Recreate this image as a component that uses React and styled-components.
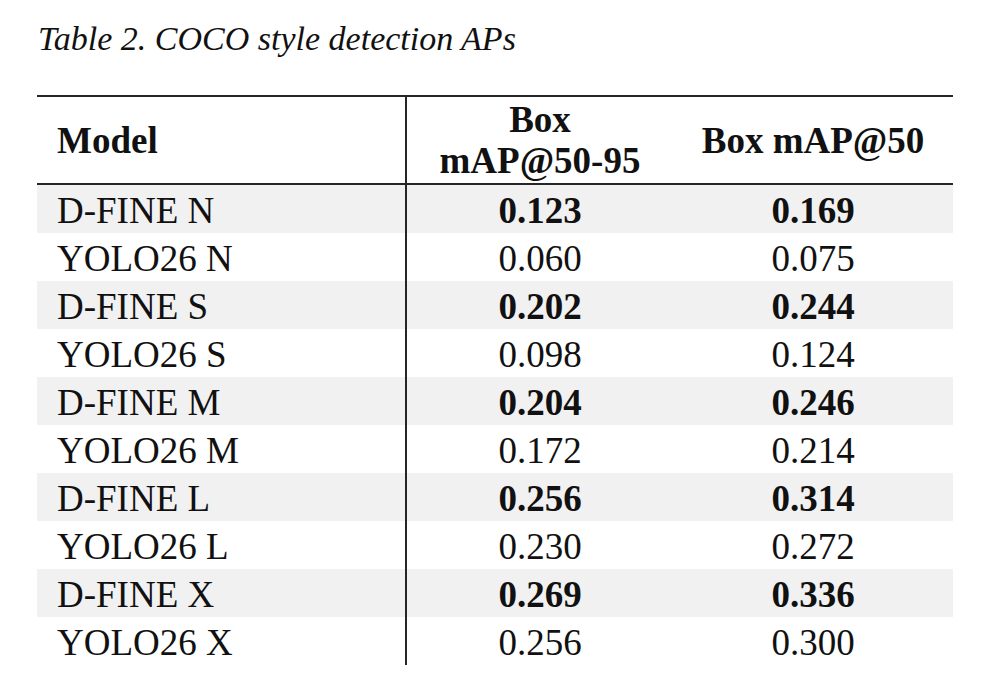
import React from "react";
import styled, { createGlobalStyle } from "styled-components";

const GlobalStyle = createGlobalStyle`
  body {
    margin: 0;
    background: #ffffff;
    font-family: "Liberation Serif", "Times New Roman", serif;
    color: #111111;
  }
`;

const Page = styled.div`
  padding: 19px 0 0 37px;
`;

const Caption = styled.div`
  font-style: italic;
  font-size: 34px;
  line-height: 40px;
  margin-left: 1px;
  margin-bottom: 36px;
`;

const Table = styled.div`
  width: 916px;
  border-top: 2px solid #262626;
`;

const Row = styled.div`
  display: grid;
  grid-template-columns: 370px 266px 280px;
  height: ${(p) => (p.$head ? "88px" : "48px")};
  box-sizing: border-box;
  padding-top: ${(p) => (p.$head ? "0" : "2px")};
  background: ${(p) => (p.$shaded ? "#f1f1f1" : "transparent")};
  border-bottom: ${(p) => (p.$head ? "2px solid #262626" : "none")};
`;

const Cell = styled.div`
  display: flex;
  align-items: center;
  justify-content: ${(p) => (p.$first ? "flex-start" : "center")};
  text-align: center;
  padding-left: ${(p) => (p.$first ? "20px" : "0")};
  border-right: ${(p) => (p.$first ? "2px solid #262626" : "none")};
  margin-top: ${(p) => (p.$first ? "-2px" : "0")};
  padding-top: ${(p) => (p.$first ? "2px" : "0")};
  font-size: 37px;
  line-height: 41px;
  font-weight: ${(p) => (p.$bold ? 700 : 400)};
  white-space: nowrap;
`;

const rows = [
  ["D-FINE N", "0.123", "0.169", true],
  ["YOLO26 N", "0.060", "0.075", false],
  ["D-FINE S", "0.202", "0.244", true],
  ["YOLO26 S", "0.098", "0.124", false],
  ["D-FINE M", "0.204", "0.246", true],
  ["YOLO26 M", "0.172", "0.214", false],
  ["D-FINE L", "0.256", "0.314", true],
  ["YOLO26 L", "0.230", "0.272", false],
  ["D-FINE X", "0.269", "0.336", true],
  ["YOLO26 X", "0.256", "0.300", false],
];

export default function App() {
  return (
    <Page>
      <GlobalStyle />
      <Caption>Table 2. COCO style detection APs</Caption>
      <Table>
        <Row $head>
          <Cell $first $bold>Model</Cell>
          <Cell $bold>
            Box
            <br />
            mAP@50-95
          </Cell>
          <Cell $bold>Box mAP@50</Cell>
        </Row>
        {rows.map(([model, ap, ap50, dfine]) => (
          <Row key={model} $shaded={dfine}>
            <Cell $first>{model}</Cell>
            <Cell $bold={dfine}>{ap}</Cell>
            <Cell $bold={dfine}>{ap50}</Cell>
          </Row>
        ))}
      </Table>
    </Page>
  );
}
